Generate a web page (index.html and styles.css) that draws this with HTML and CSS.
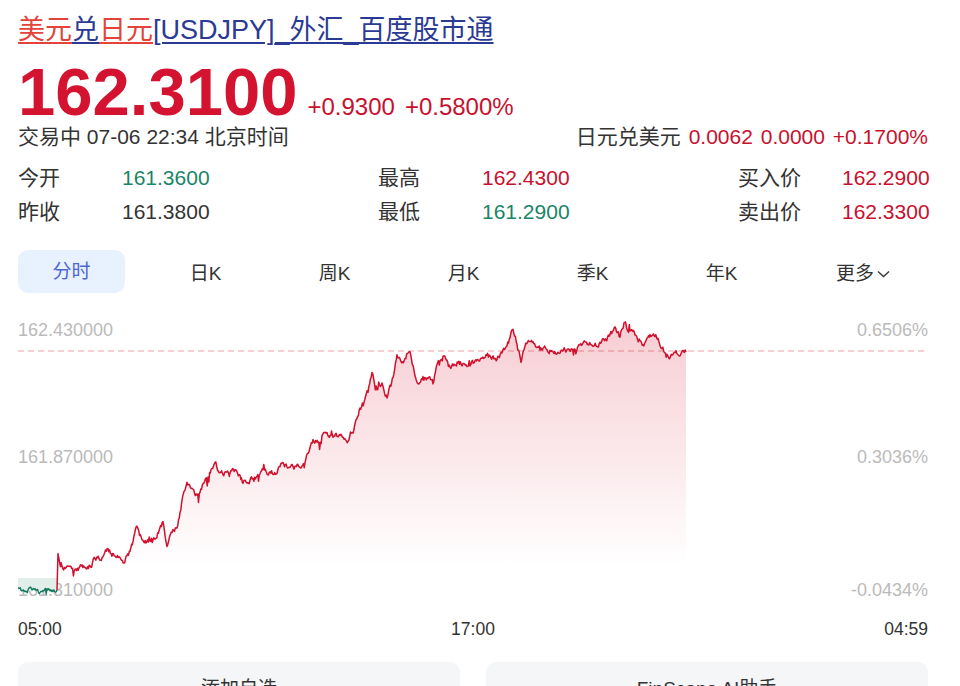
FILE: index.html
```html
<!DOCTYPE html>
<html lang="zh-CN">
<head>
    <meta charset="UTF-8">
    <meta name="viewport" content="width=device-width, initial-scale=1.0">
    <title>美元兑日元[USDJPY]_外汇_百度股市通</title>
    <link rel="stylesheet" href="styles.css">
</head>
<body>
    <div class="page">
        <h1 class="title">
            <span class="t-red">美元</span><span class="t-blue">兑</span><span class="t-red">日元</span><span class="t-blue">[USDJPY]_外汇_百度股市通</span>
        </h1>

        <div class="price-row">
            <span class="price">162.3100</span>
            <span class="change">+0.9300</span>
            <span class="change">+0.5800%</span>
        </div>

        <div class="status-row">
            <span>交易中 07-06 22:34 北京时间</span>
            <span class="cross">日元兑美元 <em>0.0062</em> <em>0.0000</em> <em>+0.1700%</em></span>
        </div>

        <div class="stats">
            <div class="stat"><span class="stat-label">今开</span><span class="stat-val down">161.3600</span></div>
            <div class="stat"><span class="stat-label">最高</span><span class="stat-val up">162.4300</span></div>
            <div class="stat"><span class="stat-label">买入价</span><span class="stat-val up">162.2900</span></div>
            <div class="stat"><span class="stat-label">昨收</span><span class="stat-val">161.3800</span></div>
            <div class="stat"><span class="stat-label">最低</span><span class="stat-val down">161.2900</span></div>
            <div class="stat"><span class="stat-label">卖出价</span><span class="stat-val up">162.3300</span></div>
        </div>

        <div class="tabs">
            <div class="tab-first"><span class="tab active">分时</span></div>
            <span class="tab">日K</span>
            <span class="tab">周K</span>
            <span class="tab">月K</span>
            <span class="tab">季K</span>
            <span class="tab">年K</span>
            <span class="tab tab-more">更多<svg width="13" height="8" viewBox="0 0 13 8"><polyline points="1,1.5 6.5,6.5 12,1.5" fill="none" stroke="#333" stroke-width="1.3"/></svg></span>
        </div>

        <div class="chart">
            <span class="axis-l" style="top: 14px">162.430000</span>
            <span class="axis-l" style="top: 141px">161.870000</span>
            <span class="axis-l" style="top: 274px">161.310000</span>
            <span class="axis-r" style="top: 14px">0.6506%</span>
            <span class="axis-r" style="top: 141px">0.3036%</span>
            <span class="axis-r" style="top: 274px">-0.0434%</span>
            <svg id="chart" class="chart-svg" width="910" height="310" viewBox="18 305 910 310">
                <defs>
                    <linearGradient id="redFill" gradientUnits="userSpaceOnUse" x1="0" y1="325" x2="0" y2="565">
                        <stop offset="0" stop-color="#d81e37" stop-opacity="0.22"/>
                        <stop offset="1" stop-color="#d81e37" stop-opacity="0"/>
                    </linearGradient>
                </defs>
                <line x1="18" y1="351" x2="928" y2="351" stroke="#e9a0a8" stroke-width="1.2" stroke-dasharray="6 4"/>
                <rect x="18" y="578" width="39" height="13" fill="#e2eee9"/>
                <path id="redArea" fill="url(#redFill)"/>
                <path id="greenLine" fill="none" stroke="#16795f" stroke-width="1.4" stroke-linejoin="round"/>
                <path id="redLine" fill="none" stroke="#d0102c" stroke-width="1.5" stroke-linejoin="round"/>
            </svg>
        </div>

        <div class="time-axis">
            <span>05:00</span>
            <span>17:00</span>
            <span>04:59</span>
        </div>

        <div class="actions">
            <button>添加自选</button>
            <button>FinScope AI助手</button>
        </div>
    </div>

    <script>
        // 简单的可复现随机数
        let seed = 20240706;
        function rand() {
            seed |= 0; seed = seed + 0x6D2B79F5 | 0;
            let t = Math.imul(seed ^ seed >>> 15, 1 | seed);
            t = t + Math.imul(t ^ t >>> 7, 61 | t) ^ t;
            return ((t ^ t >>> 14) >>> 0) / 4294967296;
        }

        // 走势关键点（x, y）
        const greenPts = [[18,588],[25,591],[32,590],[40,592],[47,589],[53,592],[57,590]];
        const redPts = [
            [57,590],[58,553],[62,566],[75,568],[90,566],[95,559],[103,556],[108,549],[115,556],[120,558],
            [124,563],[130,552],[137,527],[142,540],[150,541],[156,538],[163,522],[167,546],[172,533],[177,528],
            [180,512],[184,492],[187,482],[192,488],[197,496],[203,484],[208,477],[215,462],[220,473],[226,472],
            [235,470],[240,476],[243,483],[250,480],[257,476],[263,469],[270,472],[277,473],[283,462],[290,468],
            [298,465],[305,462],[309,452],[313,440],[318,443],[322,436],[327,432],[333,438],[340,435],[348,440],
            [353,433],[356,420],[360,408],[364,402],[368,393],[372,373],[377,390],[382,382],[387,398],[393,378],
            [397,354],[401,362],[405,358],[410,352],[414,370],[418,384],[423,376],[428,378],[433,384],[437,364],
            [443,356],[450,368],[458,363],[466,364],[474,362],[482,358],[490,356],[497,360],[502,354],[507,346],
            [513,330],[517,344],[521,362],[525,346],[530,342],[537,347],[543,348],[550,350],[557,354],[565,350],
            [575,350],[580,346],[585,341],[592,345],[600,342],[606,340],[610,335],[615,327],[620,337],[624,323],
            [630,331],[635,335],[640,341],[643,345],[647,338],[650,334],[655,337],[658,338],[662,348],[667,354],
            [672,356],[676,351],[681,353],[686,352]
        ];

        function jitter(pts, amp) {
            const out = [];
            let n = 0;
            for (let i = 0; i < pts.length - 1; i++) {
                const [x0, y0] = pts[i];
                const [x1, y1] = pts[i + 1];
                const steps = Math.max(1, Math.round((x1 - x0) / 0.8));
                for (let s = 0; s < steps; s++) {
                    const k = s / steps;
                    n = n * 0.55 + (rand() - 0.5) * amp;
                    let spike = rand() < 0.05 ? (rand() - 0.5) * amp * 3 : 0;
                    if (s === 0) { n *= 0.3; spike = 0; }
                    out.push([x0 + (x1 - x0) * k, y0 + (y1 - y0) * k + n + spike]);
                }
            }
            out.push(pts[pts.length - 1]);
            return out;
        }

        function toPath(pts) {
            return pts.map((p, i) => (i ? 'L' : 'M') + p[0].toFixed(1) + ' ' + p[1].toFixed(1)).join('');
        }

        const green = jitter(greenPts, 4);
        const red = jitter(redPts, 5);
        document.getElementById('greenLine').setAttribute('d', toPath(green));
        document.getElementById('redLine').setAttribute('d', toPath(red));
        document.getElementById('redArea').setAttribute('d', toPath(red) + 'L686 600L57 600Z');
    </script>
</body>
</html>
```

FILE: styles.css
```css
body {
    margin: 0;
    background: #fff;
    color: #333;
    font-family: "Liberation Sans", "Noto Sans CJK SC", sans-serif;
}
.page {
    width: 910px;
    padding: 14px 0 0 18px;
}
.title {
    margin: 0;
    font-size: 27px;
    font-weight: normal;
    line-height: 32px;
}
.title span {
    text-decoration: underline;
    text-underline-offset: 3px;
    text-decoration-thickness: 2px;
}
.t-red {
    color: #e3433a;
}
.t-blue {
    color: #2b3a93;
}
.price-row {
    display: flex;
    align-items: baseline;
    margin-top: 13px;
    height: 66px;
    line-height: 66px;
}
.price {
    font-size: 67px;
    font-weight: bold;
    color: #d3132f;
    margin-right: 10px;
}
.change {
    font-size: 24px;
    color: #c8102e;
    margin-right: 10px;
}
.status-row {
    display: flex;
    justify-content: space-between;
    font-size: 21px;
    line-height: 24px;
}
.cross em {
    font-style: normal;
    color: #c8102e;
    margin-left: 2px;
}
.stats {
    display: grid;
    grid-template-columns: 360px 360px 1fr;
    margin-top: 12px;
    font-size: 21px;
    line-height: 34px;
}
.stat {
    display: flex;
}
.stat-label {
    width: 104px;
}
.stat-val.up {
    color: #c8102e;
}
.stat-val.down {
    color: #1a8468;
}
.tabs {
    display: grid;
    grid-template-columns: 123px repeat(5, 129px) 1fr;
    align-items: center;
    margin-top: 21px;
    height: 43px;
    font-size: 19px;
}
.tab {
    text-align: center;
}
.tab.active {
    display: block;
    width: 107px;
    line-height: 43px;
    border-radius: 10px;
    background: #e8f1fe;
    color: #4d67d3;
}
.tab-more {
    padding-left: 12px;
}
.tab-more svg {
    margin-left: 3px;
    vertical-align: 2px;
}
.chart {
    position: relative;
    margin-top: 12px;
    height: 310px;
}
.chart-svg {
    position: relative;
    display: block;
}
.axis-l,
.axis-r {
    position: absolute;
    font-size: 18px;
    line-height: 22px;
    color: #bababa;
}
.axis-l {
    left: 0;
}
.axis-r {
    right: 0;
}
.time-axis {
    display: flex;
    justify-content: space-between;
    height: 28px;
    line-height: 28px;
    font-size: 17.5px;
    color: #333;
}
.actions {
    display: grid;
    grid-template-columns: 1fr 1fr;
    gap: 26px;
    margin-top: 19px;
}
.actions button {
    height: 48px;
    border: none;
    border-radius: 10px;
    background: #f5f6f8;
    color: #333;
    font-family: inherit;
    font-size: 19px;
}
```
